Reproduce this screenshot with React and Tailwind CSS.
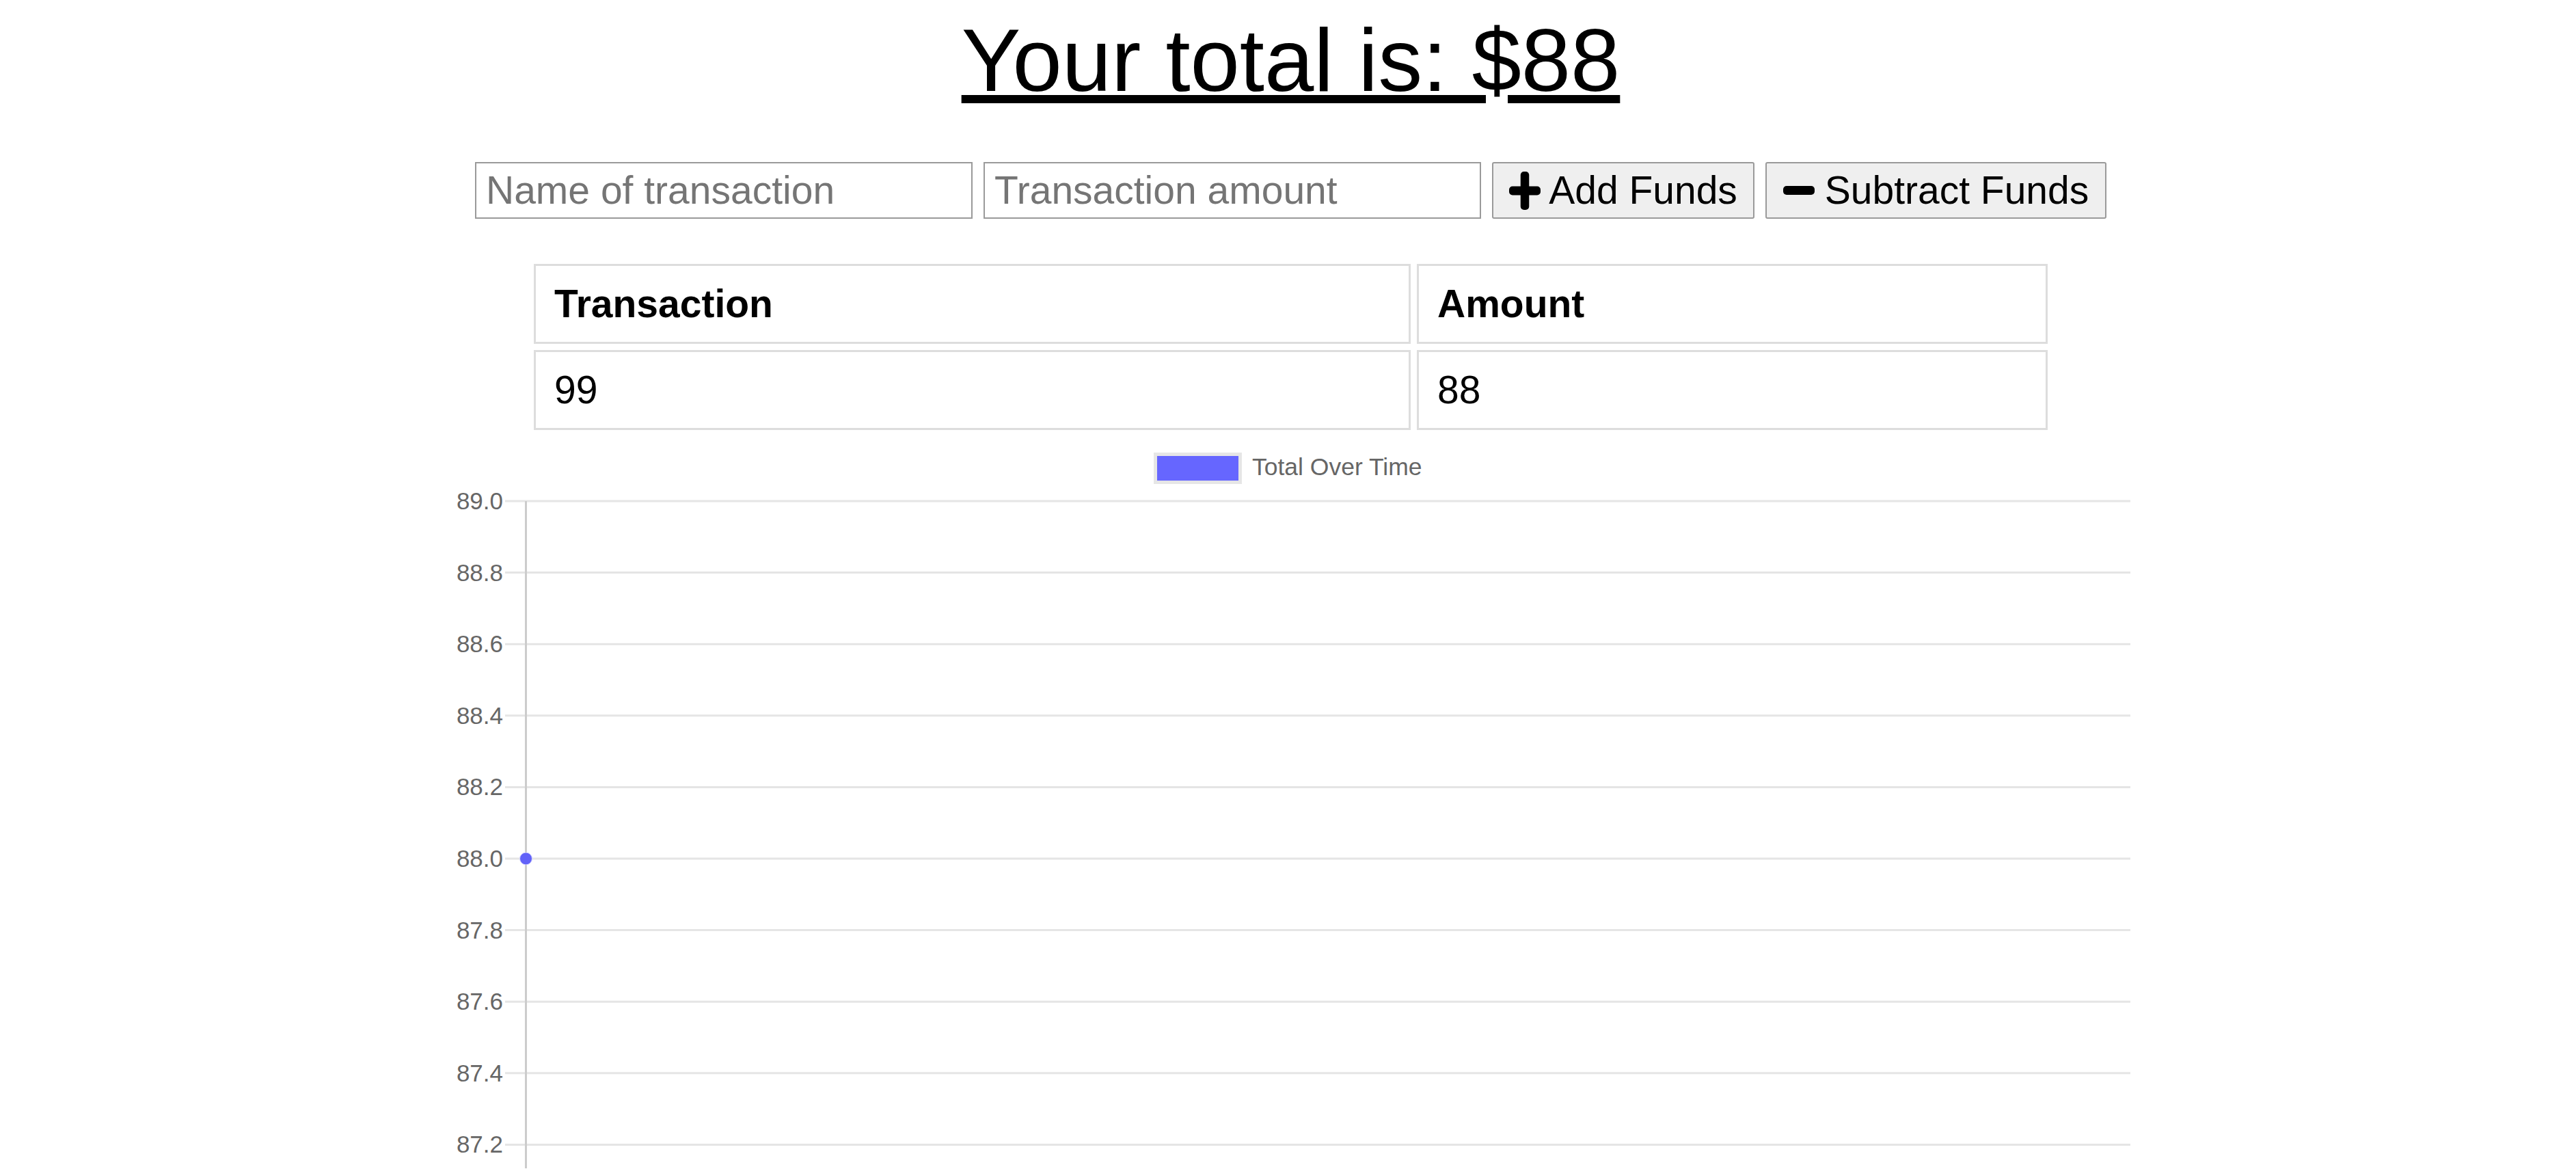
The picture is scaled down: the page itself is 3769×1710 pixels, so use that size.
import React from 'react';

const FONT = { fontFamily: '"Liberation Sans", Arial, sans-serif' };

const PlusIcon = () => (
  <svg width="46" height="56" viewBox="0 0 46 56" className="shrink-0">
    <rect x="16.75" y="0" width="12.5" height="56" rx="5" fill="#000" />
    <rect x="0" y="21.5" width="46" height="13" rx="5" fill="#000" />
  </svg>
);

const MinusIcon = () => (
  <svg width="46" height="13" viewBox="0 0 46 13" className="shrink-0">
    <rect x="0" y="0" width="46" height="13" rx="5" fill="#000" />
  </svg>
);

const ticks = ['89.0', '88.8', '88.6', '88.4', '88.2', '88.0', '87.8', '87.6', '87.4', '87.2'];

const Chart = () => {
  const top = 733;
  const step = 104.6;
  return (
    <svg width="3769" height="1080" viewBox="0 629 3769 1080" className="block">
      {/* legend */}
      <rect x="1690.5" y="664.5" width="124" height="41" fill="#6666ff" stroke="#e6e6e6" strokeWidth="5" />
      <text x="1832" y="695" fontSize="35.5" fill="#666" style={FONT}>Total Over Time</text>

      {ticks.map((t, i) => {
        const y = top + i * step;
        return (
          <g key={t}>
            <line x1="739" x2="3117" y1={y} y2={y} stroke="#e5e5e5" strokeWidth="3" />
            <text x="736" y={y + 12} fontSize="35" fill="#666" textAnchor="end" style={FONT}>{t}</text>
          </g>
        );
      })}
      <line x1="739" x2="3117" y1={top + 10 * step} y2={top + 10 * step} stroke="#e5e5e5" strokeWidth="3" />

      <line x1="769.5" x2="769.5" y1={top} y2="1709" stroke="#cccccc" strokeWidth="3" />
      <circle cx="769.5" cy={top + 5 * step} r="9" fill="#6262f8" stroke="#d8d8ff" strokeWidth="1" />
    </svg>
  );
};

export default function App() {
  return (
    <div className="w-full bg-white text-black pl-[8px]" style={FONT}>
      <h1 className="mt-[14px] text-center text-[130px] leading-[149px] font-normal underline decoration-[12px] underline-offset-[6px]">
        Your total is: $88
      </h1>

      <div className="mt-[74px] flex justify-center gap-[16px]">
        <input
          type="text"
          placeholder="Name of transaction"
          className="w-[728px] h-[83px] border-2 border-[#9a9a9a] px-[14px] text-[57px] placeholder:text-[#757575] outline-none"
          style={FONT}
        />
        <input
          type="number"
          placeholder="Transaction amount"
          className="w-[728px] h-[83px] border-2 border-[#9a9a9a] px-[14px] text-[57px] placeholder:text-[#757575] outline-none"
          style={FONT}
        />
        <button
          className="w-[384px] h-[83px] flex items-center justify-center gap-[12px] bg-[#efefef] border-2 border-[#9a9a9a] rounded-[3px] text-[57px]"
          style={FONT}
        >
          <PlusIcon />
          <span>Add Funds</span>
        </button>
        <button
          className="w-[499px] h-[83px] flex items-center justify-center gap-[15px] bg-[#efefef] border-2 border-[#9a9a9a] rounded-[3px] text-[57px]"
          style={FONT}
        >
          <MinusIcon />
          <span>Subtract Funds</span>
        </button>
      </div>

      <div className="mt-[66px] grid grid-cols-[1283px_923px] gap-[9px] justify-center text-[57px]">
        <div className="h-[117px] flex items-center border-[3px] border-[#dddddd] pl-[27px] font-bold">Transaction</div>
        <div className="h-[117px] flex items-center border-[3px] border-[#dddddd] pl-[27px] font-bold">Amount</div>
        <div className="h-[117px] flex items-center border-[3px] border-[#dddddd] pl-[27px]">99</div>
        <div className="h-[117px] flex items-center border-[3px] border-[#dddddd] pl-[27px]">88</div>
      </div>

      <div className="-ml-[8px]">
        <Chart />
      </div>
    </div>
  );
}
